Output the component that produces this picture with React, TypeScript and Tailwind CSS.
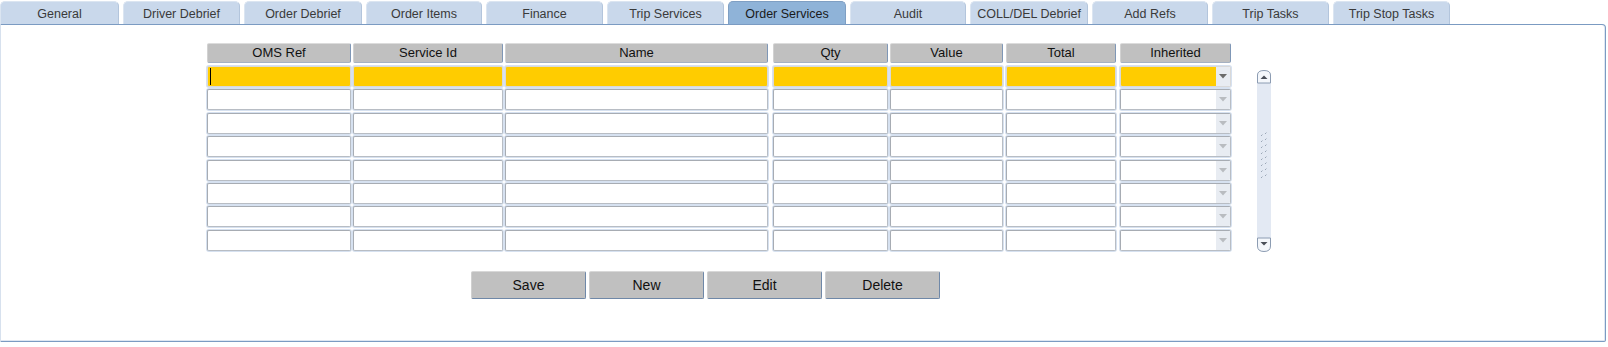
import React from "react";

const tabs: { label: string; cls: string; active?: boolean }[] = [
  { label: "General", cls: "w-[119px]" },
  { label: "Driver Debrief", cls: "w-[117px]" },
  { label: "Order Debrief", cls: "w-[118px]" },
  { label: "Order Items", cls: "w-[116px]" },
  { label: "Finance", cls: "w-[117px]" },
  { label: "Trip Services", cls: "w-[117px]" },
  { label: "Order Services", cls: "w-[118px]", active: true },
  { label: "Audit", cls: "w-[116px]" },
  { label: "COLL/DEL Debrief", cls: "w-[118px]" },
  { label: "Add Refs", cls: "w-[116px]" },
  { label: "Trip Tasks", cls: "w-[117px]" },
  { label: "Trip Stop Tasks", cls: "w-[117px]" },
];

const cols: { label: string; cls: string }[] = [
  { label: "OMS Ref", cls: "w-[144px]" },
  { label: "Service Id", cls: "w-[150px] ml-[2px]" },
  { label: "Name", cls: "w-[263px] ml-[2px]" },
  { label: "Qty", cls: "w-[115px] ml-[5px]" },
  { label: "Value", cls: "w-[113px] ml-[2px]" },
  { label: "Total", cls: "w-[110px] ml-[3px]" },
  { label: "Inherited", cls: "w-[111px] ml-[4px]" },
];

function Arrow({ dark }: { dark: boolean }) {
  return (
    <svg width="8" height="5" viewBox="0 0 8 5">
      <polygon points="0,0 8,0 4,4.5" fill={dark ? "#6b6b6b" : "#b9bcc0"} />
    </svg>
  );
}

function Row({ active }: { active: boolean }) {
  const cellBorder = active
    ? "border border-[#d9d9d9]"
    : "border border-t-[#a7acb3] border-l-[#a7acb3] border-r-[#b8bdc4] border-b-[#b8bdc4]";
  return (
    <div className="flex h-[21px]">
      {cols.map((c, i) => {
        const last = i === cols.length - 1;
        return (
          <div
            key={c.label}
            className={`${c.cls} relative h-[21px] rounded-[2px] ${cellBorder} shadow-[0_0_0_1px_#d6e1f0] flex overflow-hidden ${
              active && !last ? "bg-[#ffcc00]" : "bg-white"
            }`}
          >
            {last && (
              <>
                <div className={`flex-1 ${active ? "bg-[#ffcc00]" : "bg-white"}`} />
                <div className="w-[14px] bg-[#e8ecf2] flex items-center justify-center">
                  <Arrow dark={active} />
                </div>
              </>
            )}
            {active && i === 0 && (
              <div className="absolute left-[2px] top-[1px] w-[1px] h-[17px] bg-black" />
            )}
          </div>
        );
      })}
    </div>
  );
}

function Scrollbar() {
  const dots: React.ReactElement[] = [];
  for (let k = 0; k < 8; k++) {
    const y = 63 + k * 6;
    dots.push(<rect key={"a" + k} x={5} y={y + 2} width={1} height={1} fill="#9aa6b6" />);
    dots.push(<rect key={"b" + k} x={6} y={y + 1} width={1} height={1} fill="#c3ccd8" />);
    dots.push(<rect key={"c" + k} x={9} y={y} width={1} height={1} fill="#9aa6b6" />);
    dots.push(<rect key={"d" + k} x={10} y={y - 1} width={1} height={1} fill="#c3ccd8" />);
  }
  return (
    <svg width="16" height="182" viewBox="0 0 16 182" className="block">
      <rect x="1" y="6" width="14" height="170" fill="#e3e9f3" />
      <path d="M1.5 13 V5 Q1.5 0.5 8 0.5 Q14.5 0.5 14.5 5 V13 Z" fill="#f4f7fb" stroke="#8c9cb2" />
      <polygon points="4.5,9 11.5,9 8,5.5" fill="#4a4f58" />
      <path d="M1.5 168 V176 Q1.5 181.5 8 181.5 Q14.5 181.5 14.5 176 V168 Z" fill="#f4f7fb" stroke="#8c9cb2" />
      <polygon points="4.5,172 11.5,172 8,175.5" fill="#4a4f58" />
      {dots}
    </svg>
  );
}

export default function App() {
  return (
    <div
      className="w-[1608px] h-[347px] bg-white overflow-hidden"
      style={{ fontFamily: '"Liberation Sans", Arial, sans-serif' }}
    >
      <div className="flex gap-[4px] h-[24px] items-end">
        {tabs.map((t) => (
          <div
            key={t.label}
            className={`${t.cls} h-[23px] rounded-t-[5px] border border-b-0 flex items-center justify-center pt-[2px] text-[12.5px] ${
              t.active
                ? "bg-[#8fb3d8] border-[#7f9fc3] text-[#1a1a1a]"
                : "bg-[#c9d8eb] border-[#dbe5f1] border-r-[#b3c5dc] text-[#3a3a3a]"
            }`}
          >
            {t.label}
          </div>
        ))}
      </div>
      <div className="w-[1606px] h-[318px] border border-[#7b9bc2] border-l-[#d7e1ee] rounded-tr-[4px] rounded-br-[2px] shadow-[inset_0_-1px_0_#dfe7f2,inset_-1px_0_0_#dfe7f2] pl-[206px] pt-[18px]">
        <div className="flex">
          <div className="flex flex-col">
            <div className="flex h-[20px]">
              {cols.map((c) => (
                <div
                  key={c.label}
                  className={`${c.cls} h-[20px] rounded-[2px] bg-[#c0c0c0] border border-t-[#dcdcdc] border-l-[#d2d2d2] border-r-[#7f97b6] border-b-[#a5b1c2] flex items-center justify-center text-[13px] text-[#111]`}
                >
                  {c.label}
                </div>
              ))}
            </div>
            <div className="flex flex-col gap-[2.4px] mt-[3px]">
              {Array.from({ length: 8 }).map((_, i) => (
                <Row key={i} active={i === 0} />
              ))}
            </div>
          </div>
          <div className="ml-[25px] mt-[27px]">
            <Scrollbar />
          </div>
        </div>
        <div className="flex gap-[3px] ml-[264px] mt-[19px]">
          {["Save", "New", "Edit", "Delete"].map((b) => (
            <div
              key={b}
              className="w-[115px] h-[28px] rounded-[2px] bg-[#c0c0c0] border border-t-[#d8d8d8] border-l-[#d0d0d0] border-r-[#6f88a8] border-b-[#6f88a8] flex items-center justify-center text-[14px] text-[#111]"
            >
              {b}
            </div>
          ))}
        </div>
      </div>
    </div>
  );
}
